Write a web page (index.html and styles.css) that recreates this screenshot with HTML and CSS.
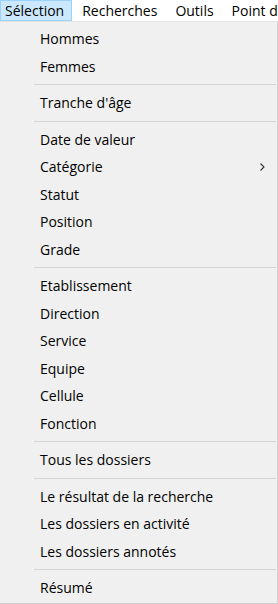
FILE: index.html
```html
<!DOCTYPE html>
<html lang="fr">
<head>
    <meta charset="UTF-8">
    <title>Menu Sélection</title>
    <link rel="stylesheet" href="styles.css">
</head>
<body>
    <ul class="menubar">
        <li class="open">Sélection</li>
        <li>Recherches</li>
        <li>Outils</li>
        <li>Point d'étape</li>
    </ul>
    <ul class="popup">
        <li class="item">Hommes</li>
        <li class="item">Femmes</li>
        <li class="sep"></li>
        <li class="item">Tranche d'âge</li>
        <li class="sep"></li>
        <li class="item">Date de valeur</li>
        <li class="item sub">Catégorie
            <svg class="arrow" width="5" height="8" viewBox="0 0 5 8"><path d="M0.5 0.5 L4 4 L0.5 7.5" fill="none" stroke="#333" stroke-width="1.1"/></svg>
        </li>
        <li class="item">Statut</li>
        <li class="item">Position</li>
        <li class="item">Grade</li>
        <li class="sep"></li>
        <li class="item">Etablissement</li>
        <li class="item">Direction</li>
        <li class="item">Service</li>
        <li class="item">Equipe</li>
        <li class="item">Cellule</li>
        <li class="item">Fonction</li>
        <li class="sep"></li>
        <li class="item">Tous les dossiers</li>
        <li class="sep"></li>
        <li class="item">Le résultat de la recherche</li>
        <li class="item">Les dossiers en activité</li>
        <li class="item">Les dossiers annotés</li>
        <li class="sep"></li>
        <li class="item">Résumé</li>
    </ul>
</body>
</html>
```

FILE: styles.css
```css
* {
    margin: 0;
    padding: 0;
    box-sizing: border-box;
}
ul {
    list-style: none;
}
body {
    width: 278px;
    height: 604px;
    overflow: hidden;
    background: #fff;
    font-family: "Open Sans", "Noto Sans", sans-serif;
    font-size: 14px;
    color: #000;
}
.menubar {
    display: flex;
    height: 22px;
    background: #fff;
    border-bottom: 1px solid #e3e3e3;
    white-space: nowrap;
    overflow: hidden;
}
.menubar li {
    height: 21px;
    line-height: 19px;
    padding: 0 7px 0 9px;
    border: 1px solid transparent;
}
.menubar .open {
    background: #cce8ff;
    border-color: #99d1ff;
    padding-left: 4px;
}
.popup {
    background: #f0f0f0;
    border-right: 1px solid #cfcfcf;
    border-bottom: 1px solid #cfcfcf;
    padding: 3px 1px 2px 34px;
    height: 582px;
}
.item {
    height: 27.5px;
    line-height: 27.5px;
    padding-left: 6px;
    display: flex;
    align-items: center;
    justify-content: space-between;
    padding-right: 11px;
}
.sep {
    height: 9px;
    display: flex;
    align-items: center;
}
.sep::before {
    content: "";
    display: block;
    width: 100%;
    height: 1px;
    background: #d4d4d4;
}
.arrow {
    display: block;
}
```
